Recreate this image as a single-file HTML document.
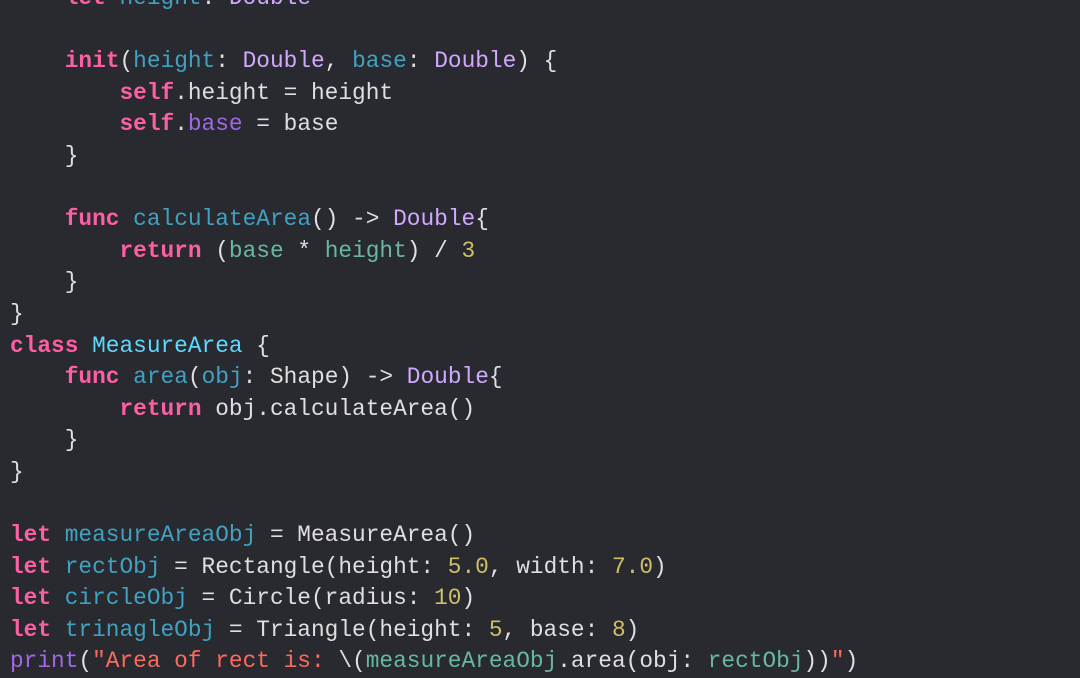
<!DOCTYPE html>
<html><head><meta charset="utf-8"><style>
html,body{margin:0;padding:0;width:1080px;height:675px;overflow:hidden;background:#292a30;}
pre{position:absolute;left:10px;top:-17px;margin:0;font-family:"Liberation Mono",monospace;font-size:22.8px;line-height:31.6px;color:#dfdfe0;white-space:pre;}
.k{color:#fc5fa3;font-weight:bold}
.t{color:#d0a8ff}
.d{color:#5dd8ff}
.v{color:#41a1c0}
.p{color:#67b7a4}
.s{color:#a167e6}
.n{color:#d0bf69}
.str{color:#fc6a5d}
</style></head><body><pre>    <span class="k">let</span> <span class="v">height</span>: <span class="t">Double</span>

    <span class="k">init</span>(<span class="v">height</span>: <span class="t">Double</span>, <span class="v">base</span>: <span class="t">Double</span>) {
        <span class="k">self</span>.height = height
        <span class="k">self</span>.<span class="s">base</span> = base
    }

    <span class="k">func</span> <span class="v">calculateArea</span>() -&gt; <span class="t">Double</span>{
        <span class="k">return</span> (<span class="p">base</span> * <span class="p">height</span>) / <span class="n">3</span>
    }
}
<span class="k">class</span> <span class="d">MeasureArea</span> {
    <span class="k">func</span> <span class="v">area</span>(<span class="v">obj</span>: Shape) -&gt; <span class="t">Double</span>{
        <span class="k">return</span> obj.calculateArea()
    }
}

<span class="k">let</span> <span class="v">measureAreaObj</span> = MeasureArea()
<span class="k">let</span> <span class="v">rectObj</span> = Rectangle(height: <span class="n">5.0</span>, width: <span class="n">7.0</span>)
<span class="k">let</span> <span class="v">circleObj</span> = Circle(radius: <span class="n">10</span>)
<span class="k">let</span> <span class="v">trinagleObj</span> = Triangle(height: <span class="n">5</span>, base: <span class="n">8</span>)
<span class="s">print</span>(<span class="str">"Area of rect is: </span>\(<span class="p">measureAreaObj</span>.area(obj: <span class="p">rectObj</span>))<span class="str">"</span>)
</pre></body></html>
